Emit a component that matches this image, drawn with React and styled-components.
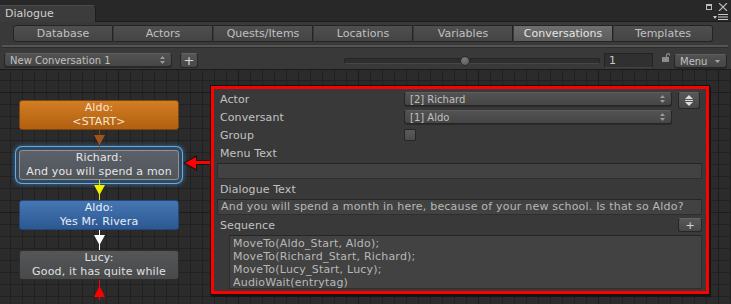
import React from 'react';
import styled, { createGlobalStyle } from 'styled-components';

const GlobalStyle = createGlobalStyle`
  html, body {
    margin: 0;
    padding: 0;
    background: #282828;
  }
  body {
    width: 731px;
    height: 304px;
    overflow: hidden;
    font-family: "DejaVu Sans", "Liberation Sans", sans-serif;
  }
`;

const Window = styled.div`
  width: 731px;
  height: 304px;
  display: flex;
  flex-direction: column;
  background: #393939;
  color: #c4c4c4;
  font-size: 11px;
  overflow: hidden;
`;

const TitleBar = styled.div`
  height: 22px;
  flex: none;
  display: flex;
  align-items: flex-end;
  background: #282828;
  border-bottom: 1px solid #1c1c1c;
  box-sizing: border-box;
`;

const TitleTab = styled.div`
  width: 96px;
  height: 17px;
  box-sizing: border-box;
  padding-left: 5px;
  line-height: 16px;
  background: #3c3c3c;
  border-top: 1px solid #4a4a4a;
  border-right: 1px solid #1d1d1d;
  border-top-right-radius: 4px;
  color: #cfcfcf;
  margin-bottom: -1px;
`;

const WindowControls = styled.div`
  margin-left: auto;
  align-self: stretch;
  display: flex;
  flex-direction: column;
  align-items: flex-end;
  padding: 3px 3px 0 0;
  gap: 3px;
`;

const ControlRow = styled.div`
  display: flex;
  align-items: center;
  gap: 6px;
`;

const TabStrip = styled.div`
  display: flex;
  margin: 3px 0 0 13px;
`;

const Tab = styled.div`
  width: 100px;
  height: 17px;
  box-sizing: border-box;
  text-align: center;
  line-height: 15px;
  font-size: 11px;
  border: 1px solid #242424;
  border-left: ${(p) => (p.$first ? '1px solid #242424' : '1px solid #3a3a3a')};
  background: ${(p) =>
    p.$active
      ? 'linear-gradient(#6e6e6e, #5c5c5c)'
      : 'linear-gradient(#4f4f4f, #444444)'};
  color: ${(p) => (p.$active ? '#e4e4e4' : '#c0c0c0')};
  border-radius: ${(p) => (p.$first ? '3px 0 0 3px' : p.$last ? '0 3px 3px 0' : '0')};
`;

const Separator = styled.div`
  margin: 3px 3px 0 2px;
  height: 2px;
  background: #545454;
  border-bottom: 1px solid #2c2c2c;
`;

const Toolbar = styled.div`
  height: 16px;
  margin-top: 4px;
  padding: 0 4px;
  display: flex;
  align-items: center;
  flex: none;
`;

const Popup = styled.div`
  width: ${(p) => p.$w}px;
  height: 14px;
  box-sizing: border-box;
  display: flex;
  align-items: center;
  padding: 0 6px 0 5px;
  font-size: 10px;
  color: #c0c0c0;
  background: linear-gradient(#525252, #464646);
  border: 1px solid #262626;
  border-top-color: #5e5e5e;
  border-radius: 3px;
  box-shadow: 0 1px 0 #2a2a2a;
  margin-left: ${(p) => p.$ml || 0}px;
  span {
    flex: 1;
    white-space: nowrap;
  }
`;

const SmallButton = styled.div`
  width: ${(p) => p.$w}px;
  height: ${(p) => p.$h}px;
  box-sizing: border-box;
  display: flex;
  align-items: center;
  justify-content: center;
  margin-left: ${(p) => (p.$auto ? 'auto' : `${p.$ml || 0}px`)};
  margin-right: ${(p) => (p.$auto ? '1px' : '0')};
  background: linear-gradient(#575757, #474747);
  border: 1px solid #262626;
  border-top-color: #636363;
  border-radius: 3px;
  color: #d6d6d6;
  font-size: ${(p) => p.$fs || 13}px;
  line-height: 1;
  align-self: ${(p) => (p.$top ? 'flex-start' : 'auto')};
  margin-top: ${(p) => p.$mt || 0}px;
`;

const Slider = styled.div`
  width: 256px;
  height: 16px;
  margin-left: 146px;
  display: flex;
  align-items: center;
  position: relative;
`;

const SliderTrack = styled.div`
  width: 100%;
  height: 4px;
  margin-top: 2px;
  border-radius: 2px;
  background: #2e2e2e;
  border: 1px solid #252525;
  border-bottom-color: #464646;
`;

const SliderKnob = styled.div`
  position: absolute;
  left: 116px;
  top: 4px;
  width: 10px;
  height: 10px;
  border-radius: 50%;
  background: radial-gradient(circle at 40% 35%, #7a7a7a, #555555);
  border: 1px solid #2a2a2a;
  box-sizing: border-box;
`;

const NumberField = styled.div`
  width: 49px;
  height: 15px;
  margin: 1px 0 0 4px;
  box-sizing: border-box;
  padding-left: 4px;
  line-height: 13px;
  font-size: 11px;
  color: #c8c8c8;
  background: #303030;
  border: 1px solid #232323;
  border-bottom-color: #424242;
`;

const LockSlot = styled.div`
  width: 8px;
  margin-left: 9px;
  align-self: flex-start;
  margin-top: 1px;
  display: flex;
`;

const MenuButton = styled(Popup)`
  margin-top: 2px;
  padding-left: 5px;
`;

const Canvas = styled.div`
  flex: 1;
  display: flex;
  align-items: flex-start;
  border-top: 1px solid #1b1b1b;
  margin-top: 1px;
  background-color: #2b2b2b;
  background-image:
    linear-gradient(to right, #1c1c1c 1px, transparent 1px),
    linear-gradient(to bottom, #1c1c1c 1px, transparent 1px),
    linear-gradient(to right, #212121 1px, transparent 1px),
    linear-gradient(to bottom, #212121 1px, transparent 1px);
  background-size: 120px 120px, 120px 120px, 12px 12px, 12px 12px;
  background-position: 118px 0, 0 22px, 10px 0, 0 10px;
`;

const NodeColumn = styled.div`
  width: 160px;
  margin-left: 19px;
  padding-top: 30px;
  display: flex;
  flex-direction: column;
`;

const nodeSkins = {
  start: `
    background: linear-gradient(#d47d24, #b0600f);
    border-color: #7c4412;
    color: #f3e6d6;
  `,
  selected: `
    background: linear-gradient(#5c6068, #50545b);
    border-color: #8d9299;
    color: #e6e6e6;
    box-shadow: 0 0 0 3px #34495e, 0 0 0 4px #5eaeea, 0 0 4px 5px rgba(70, 150, 230, 0.45);
  `,
  blue: `
    background: linear-gradient(#4576b3, #2c5892);
    border-color: #254777;
    color: #e8eef6;
  `,
  plain: `
    background: linear-gradient(#545658, #47494b);
    border-color: #2e2e2e;
    color: #e0e0e0;
  `,
};

const Node = styled.div`
  height: 30px;
  box-sizing: border-box;
  border: 1px solid;
  border-radius: 3px;
  text-align: center;
  font-size: 11px;
  letter-spacing: 0.15px;
  line-height: 14px;
  white-space: nowrap;
  overflow: hidden;
  ${(p) => nodeSkins[p.$skin]}
`;

const LinkSvg = styled.svg`
  display: block;
  position: relative;
`;

const ArrowSlot = styled.div`
  width: 32px;
  margin-top: 83px;
  display: flex;
`;

const Inspector = styled.div`
  width: 498px;
  height: 208px;
  margin-top: 16px;
  box-sizing: border-box;
  border: 3px solid #ff0000;
  box-shadow: 0 0 0 1px #141414, 1px 2px 0 1px #141414;
  background: #393939;
  padding: 1px 3px 0;
  display: flex;
  flex-direction: column;
`;

const FieldRow = styled.div`
  height: 18px;
  display: flex;
  align-items: center;
  flex: none;
  margin-top: ${(p) => p.$mt || 0}px;
`;

const FieldLabel = styled.div`
  width: ${(p) => (p.$w ? `${p.$w}px` : 'auto')};
  padding-left: 3px;
  box-sizing: border-box;
  color: #c2c2c2;
  font-size: 11px;
  letter-spacing: 0.1px;
`;

const Checkbox = styled.div`
  width: 12px;
  height: 12px;
  box-sizing: border-box;
  border-radius: 2px;
  background: linear-gradient(#5a5a5a, #4c4c4c);
  border: 1px solid #262626;
`;

const TextField = styled.div`
  height: ${(p) => p.$h}px;
  margin-top: ${(p) => p.$mt || 1}px;
  margin-left: ${(p) => p.$ml || 0}px;
  margin-right: 1px;
  box-sizing: border-box;
  padding: ${(p) => p.$pad || '0 3px'};
  background: #424242;
  border: 1px solid #2e2e2e;
  border-top-color: #262626;
  color: #b8b8b8;
  font-size: 11px;
  letter-spacing: 0.2px;
  line-height: ${(p) => p.$lh || 14}px;
  white-space: pre;
  overflow: hidden;
  flex: none;
`;

const tabs = ['Database', 'Actors', 'Quests/Items', 'Locations', 'Variables', 'Conversations', 'Templates'];

const UpDown = ({ size = 'small' }) =>
  size === 'small' ? (
    <svg width="5" height="8" viewBox="0 0 5 8">
      <polygon points="2.5,0 5,3 0,3" fill="#9a9a9a" />
      <polygon points="0,5 5,5 2.5,8" fill="#9a9a9a" />
    </svg>
  ) : (
    <svg width="8" height="11" viewBox="0 0 8 11">
      <polygon points="4,0 8,4 0,4" fill="#dcdcdc" />
      <rect x="0" y="5" width="8" height="1" fill="#dcdcdc" />
      <polygon points="0,7 8,7 4,11" fill="#dcdcdc" />
    </svg>
  );

const Link = ({ fill, stroke, up }) => (
  <LinkSvg width="160" height="20" viewBox="0 0 160 20">
    <rect x="80" y="0" width="1" height="20" fill={stroke} />
    {up ? (
      <polygon points="80.5,6 86,17 75,17" fill={fill} />
    ) : (
      <polygon points="75,5 86,5 80.5,15" fill={fill} />
    )}
  </LinkSvg>
);

const sequence = [
  'MoveTo(Aldo_Start, Aldo);',
  'MoveTo(Richard_Start, Richard);',
  'MoveTo(Lucy_Start, Lucy);',
  'AudioWait(entrytag)',
];

export default function App() {
  return (
    <>
      <GlobalStyle />
      <Window>
        <TitleBar>
          <TitleTab>Dialogue</TitleTab>
          <WindowControls>
            <ControlRow>
              <svg width="6" height="6" viewBox="0 0 6 6">
                <rect x="0.5" y="0.5" width="5" height="5" fill="none" stroke="#bdbdbd" />
                <rect x="0.5" y="0.5" width="5" height="1.5" fill="#bdbdbd" />
              </svg>
              <svg width="10" height="8" viewBox="0 0 10 8">
                <path d="M1 0 L9 8 M9 0 L1 8" stroke="#bdbdbd" strokeWidth="1.1" />
              </svg>
            </ControlRow>
            <svg width="15" height="6" viewBox="0 0 15 6">
              <polygon points="0,2 4,2 2,5" fill="#c8c8c8" />
              <rect x="5" y="0" width="10" height="1" fill="#c8c8c8" />
              <rect x="5" y="2.5" width="10" height="1" fill="#c8c8c8" />
              <rect x="5" y="5" width="10" height="1" fill="#c8c8c8" />
            </svg>
          </WindowControls>
        </TitleBar>

        <TabStrip>
          {tabs.map((t, i) => (
            <Tab key={t} $active={t === 'Conversations'} $first={i === 0} $last={i === tabs.length - 1}>
              {t}
            </Tab>
          ))}
        </TabStrip>
        <Separator />

        <Toolbar>
          <Popup $w={168}>
            <span>New Conversation 1</span>
            <UpDown />
          </Popup>
          <SmallButton $w={18} $h={15} $ml={8}>+</SmallButton>
          <Slider>
            <SliderTrack />
            <SliderKnob />
          </Slider>
          <NumberField>1</NumberField>
          <LockSlot>
            <svg width="8" height="9" viewBox="0 0 8 9">
              <path d="M4.5 4 V2 A1.8 1.8 0 0 1 8 2 V3" fill="none" stroke="#8c8c8c" strokeWidth="1.2" />
              <rect x="0" y="4" width="7" height="5" fill="#8c8c8c" />
            </svg>
          </LockSlot>
          <MenuButton $w={53} $ml={4}>
            <span>Menu</span>
            <svg width="5" height="3" viewBox="0 0 5 3">
              <polygon points="0,0 5,0 2.5,3" fill="#a8a8a8" />
            </svg>
          </MenuButton>
        </Toolbar>

        <Canvas>
          <NodeColumn>
            <Node $skin="start">Aldo:<br />&lt;START&gt;</Node>
            <Link fill="#a0541c" stroke="#7a4418" />
            <Node $skin="selected">Richard:<br />And you will spend a mon</Node>
            <Link fill="#f2ee00" stroke="#e4e000" />
            <Node $skin="blue">Aldo:<br />Yes Mr. Rivera</Node>
            <Link fill="#ffffff" stroke="#ffffff" />
            <Node $skin="plain">Lucy:<br />Good, it has quite while</Node>
            <Link fill="#ff0000" stroke="#ff0000" up />
          </NodeColumn>

          <ArrowSlot>
            <svg width="32" height="20" viewBox="0 0 32 20">
              <rect x="17" y="7" width="15" height="5" fill="#141414" />
              <polygon points="4,10 18,2 18,18" fill="#141414" />
              <rect x="17" y="8" width="15" height="3" fill="#ff0000" />
              <polygon points="6,10 17,4 17,16" fill="#ff0000" />
            </svg>
          </ArrowSlot>

          <Inspector>
            <FieldRow>
              <FieldLabel $w={187}>Actor</FieldLabel>
              <Popup $w={268}>
                <span>[2] Richard</span>
                <UpDown />
              </Popup>
              <SmallButton $w={22} $h={17} $ml={6} $top $mt={2}>
                <UpDown size="big" />
              </SmallButton>
            </FieldRow>
            <FieldRow>
              <FieldLabel $w={187}>Conversant</FieldLabel>
              <Popup $w={268}>
                <span>[1] Aldo</span>
                <UpDown />
              </Popup>
            </FieldRow>
            <FieldRow>
              <FieldLabel $w={187}>Group</FieldLabel>
              <Checkbox />
            </FieldRow>
            <FieldRow>
              <FieldLabel>Menu Text</FieldLabel>
            </FieldRow>
            <TextField $h={16} />
            <FieldRow $mt={1}>
              <FieldLabel>Dialogue Text</FieldLabel>
            </FieldRow>
            <TextField $h={16}>
              And you will spend a month in here, because of your new school. Is that so Aldo?
            </TextField>
            <FieldRow $mt={1}>
              <FieldLabel>Sequence</FieldLabel>
              <SmallButton $w={24} $h={14} $fs={11} $auto>
                +
              </SmallButton>
            </FieldRow>
            <TextField $h={54} $ml={12} $pad="1px 3px 0" $lh={13}>
              {sequence.join('\n')}
            </TextField>
          </Inspector>
        </Canvas>
      </Window>
    </>
  );
}
